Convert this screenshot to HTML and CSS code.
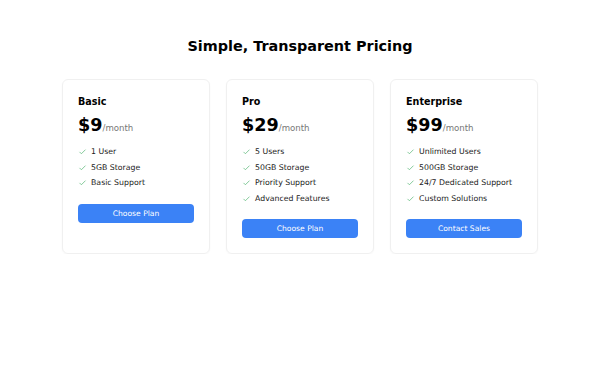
FILE: index.html
```html
<!DOCTYPE html>
<html lang="en">
<head>
    <meta charset="UTF-8">
    <meta name="viewport" content="width=device-width, initial-scale=1.0">
    <title>Pricing</title>
    <link rel="stylesheet" href="styles.css">
</head>
<body>
    <main class="pricing">
        <h1>Simple, Transparent Pricing</h1>
        <div class="plans">
            <div class="plan">
                <h2>Basic</h2>
                <p class="price">$9<span>/month</span></p>
                <ul>
                    <li><svg viewBox="0 0 12 12"><path d="M2 6.5l2.5 2.5L10 3.5"/></svg>1 User</li>
                    <li><svg viewBox="0 0 12 12"><path d="M2 6.5l2.5 2.5L10 3.5"/></svg>5GB Storage</li>
                    <li><svg viewBox="0 0 12 12"><path d="M2 6.5l2.5 2.5L10 3.5"/></svg>Basic Support</li>
                </ul>
                <button>Choose Plan</button>
            </div>
            <div class="plan">
                <h2>Pro</h2>
                <p class="price">$29<span>/month</span></p>
                <ul>
                    <li><svg viewBox="0 0 12 12"><path d="M2 6.5l2.5 2.5L10 3.5"/></svg>5 Users</li>
                    <li><svg viewBox="0 0 12 12"><path d="M2 6.5l2.5 2.5L10 3.5"/></svg>50GB Storage</li>
                    <li><svg viewBox="0 0 12 12"><path d="M2 6.5l2.5 2.5L10 3.5"/></svg>Priority Support</li>
                    <li><svg viewBox="0 0 12 12"><path d="M2 6.5l2.5 2.5L10 3.5"/></svg>Advanced Features</li>
                </ul>
                <button>Choose Plan</button>
            </div>
            <div class="plan">
                <h2>Enterprise</h2>
                <p class="price">$99<span>/month</span></p>
                <ul>
                    <li><svg viewBox="0 0 12 12"><path d="M2 6.5l2.5 2.5L10 3.5"/></svg>Unlimited Users</li>
                    <li><svg viewBox="0 0 12 12"><path d="M2 6.5l2.5 2.5L10 3.5"/></svg>500GB Storage</li>
                    <li><svg viewBox="0 0 12 12"><path d="M2 6.5l2.5 2.5L10 3.5"/></svg>24/7 Dedicated Support</li>
                    <li><svg viewBox="0 0 12 12"><path d="M2 6.5l2.5 2.5L10 3.5"/></svg>Custom Solutions</li>
                </ul>
                <button>Contact Sales</button>
            </div>
        </div>
    </main>
</body>
</html>
```

FILE: styles.css
```css
body {
    margin: 0;
    padding: 0;
    background-color: #fff;
    color: #000;
    font-family: "DejaVu Sans", sans-serif;
}
.pricing {
    display: flex;
    flex-direction: column;
    align-items: center;
    padding-top: 37px;
}
h1 {
    margin: 0 0 24px;
    font-size: 14.4px;
    line-height: 18px;
    font-weight: bold;
}
.plans {
    display: flex;
    gap: 16px;
}
.plan {
    width: 148px;
    box-sizing: border-box;
    padding: 16px 15px 15px;
    border: 1px solid #f0f0f0;
    border-radius: 6px;
    box-shadow: 0 1px 2px rgba(0, 0, 0, 0.03);
    display: flex;
    flex-direction: column;
}
h2 {
    margin: 0;
    font-size: 9.6px;
    line-height: 12px;
    font-weight: bold;
}
.price {
    margin: 6px 0 0;
    font-size: 17.6px;
    line-height: 22px;
    font-weight: bold;
}
.price span {
    font-size: 8.6px;
    font-weight: normal;
    color: #777;
}
ul {
    list-style: none;
    margin: 5px 0 0;
    padding: 0;
}
li {
    display: flex;
    align-items: center;
    gap: 4px;
    font-size: 7.8px;
    line-height: 15.5px;
    color: #222;
    white-space: nowrap;
}
li svg {
    width: 9px;
    height: 9px;
    fill: none;
    stroke: #5cb87a;
    stroke-width: 1;
}
button {
    margin-top: 13px;
    height: 19px;
    border: none;
    border-radius: 4px;
    background-color: #3b82f6;
    color: #fff;
    font-family: inherit;
    font-size: 7.6px;
    cursor: pointer;
}
```
